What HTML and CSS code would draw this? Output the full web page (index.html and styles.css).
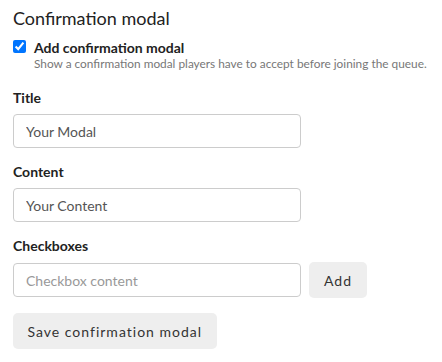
FILE: index.html
```html
<!DOCTYPE html>
<html lang="en">
<head>
    <meta charset="UTF-8">
    <meta name="viewport" content="width=device-width, initial-scale=1.0">
    <title>Confirmation modal</title>
    <link rel="stylesheet" href="styles.css">
</head>
<body>
    <div class="panel">
        <h2>Confirmation modal</h2>

        <div class="check-row">
            <input type="checkbox" id="enableModal" checked>
            <div class="check-text">
                <label for="enableModal">Add confirmation modal</label>
                <p class="hint">Show a confirmation modal players have to accept before joining the queue.</p>
            </div>
        </div>

        <div class="form-group">
            <label for="modalTitle">Title</label>
            <input type="text" id="modalTitle" value="Your Modal">
        </div>

        <div class="form-group">
            <label for="modalContent">Content</label>
            <input type="text" id="modalContent" value="Your Content">
        </div>

        <div class="form-group">
            <label for="checkboxContent">Checkboxes</label>
            <div class="inline-row">
                <input type="text" id="checkboxContent" placeholder="Checkbox content">
                <button type="button" class="btn">Add</button>
            </div>
        </div>

        <button type="button" class="btn btn-save">Save confirmation modal</button>
    </div>
</body>
</html>
```

FILE: styles.css
```css
* {
    margin: 0;
    padding: 0;
    box-sizing: border-box;
}

body {
    font-family: Lato, 'Open Sans', sans-serif;
    background: #fff;
    color: #222;
}

.panel {
    padding: 6px 13px;
}

h2 {
    font-size: 18px;
    font-weight: 400;
    line-height: 24px;
    color: #222;
    margin-bottom: 9px;
}

.check-row {
    display: flex;
    align-items: flex-start;
    gap: 8px;
    margin-bottom: 18px;
}

.check-row input[type="checkbox"] {
    flex: none;
    width: 13px;
    height: 13px;
    margin-top: 1px;
    accent-color: #0075ff;
}

.check-row label {
    display: block;
    font-size: 14px;
    font-weight: 700;
    line-height: 17px;
    color: #222;
}

.hint {
    font-size: 11.85px;
    line-height: 15px;
    color: #777;
    white-space: nowrap;
}

.form-group {
    margin-top: 15px;
}

.form-group label {
    display: block;
    font-size: 14px;
    font-weight: 700;
    line-height: 17px;
    color: #222;
    margin-bottom: 8px;
}

input[type="text"] {
    width: 288px;
    height: 34px;
    padding: 0 12px;
    border: 1px solid #ccc;
    border-radius: 4px;
    font-family: inherit;
    font-size: 14px;
    color: #555;
    outline: none;
}

input[type="text"]::placeholder {
    color: #999;
}

.inline-row {
    display: flex;
    align-items: center;
    gap: 8px;
}

.btn {
    background: #eee;
    color: #333;
    border: none;
    border-radius: 5px;
    height: 36px;
    padding: 0 15px;
    font-family: inherit;
    font-size: 14px;
    letter-spacing: 1px;
    cursor: pointer;
}

.btn-save {
    margin-top: 15px;
    padding: 0 14.5px;
}
```
